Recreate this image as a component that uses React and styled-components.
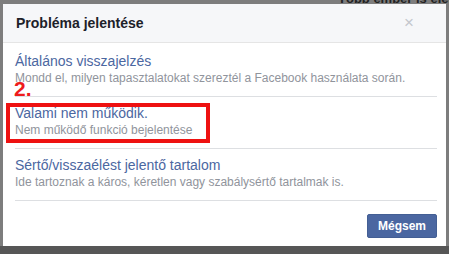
import React from 'react'
import styled, { createGlobalStyle } from 'styled-components'

const items = [
  {
    title: 'Általános visszajelzés',
    sub: 'Mondd el, milyen tapasztalatokat szereztél a Facebook használata során.',
  },
  {
    title: 'Valami nem működik.',
    sub: 'Nem működő funkció bejelentése',
  },
  {
    title: 'Sértő/visszaélést jelentő tartalom',
    sub: 'Ide tartoznak a káros, kéretlen vagy szabálysértő tartalmak is.',
  },
]

const App = () => (
  <Page>
    <GlobalStyle />
    <BackText>Több ember is elen</BackText>
    <Dialog>
      <Header>
        <Title>Probléma jelentése</Title>
        <Close>×</Close>
      </Header>
      <List>
        {items.map(item => (
          <Row key={item.title}>
            <RowTitle>{item.title}</RowTitle>
            <RowSub>{item.sub}</RowSub>
          </Row>
        ))}
      </List>
      <Footer>
        <Button>Mégsem</Button>
      </Footer>
      <StepLabel>2.</StepLabel>
      <Highlight />
    </Dialog>
  </Page>
)

export default App

const GlobalStyle = createGlobalStyle`
  html, body {
    margin: 0;
    padding: 0;
    background: #6c6c6c;
    font-family: "Liberation Sans", Arial, sans-serif;
  }
`

const Page = styled.div`
  position: relative;
  width: 449px;
  height: 254px;
  overflow: hidden;
  padding: 4px 3px 0 3px;
  box-sizing: border-box;
  background: linear-gradient(to bottom, #7d7d7d 0, #7d7d7d 246px, #565656 246px);
`
const BackText = styled.span`
  position: absolute;
  top: -9px;
  left: 338px;
  font-size: 13px;
  font-weight: bold;
  color: #222;
  white-space: nowrap;
`
const Dialog = styled.div`
  position: relative;
  width: 443px;
  height: 242px;
  background: #fff;
  display: flex;
  flex-direction: column;
`
const Header = styled.div`
  height: 38px;
  background: #f6f7f9;
  border-bottom: 1px solid #e5e5e5;
  display: flex;
  align-items: center;
  justify-content: space-between;
  padding: 0 13px 0 13px;
`
const Title = styled.div`
  font-size: 14px;
  font-weight: bold;
  color: #1d2129;
`
const Close = styled.div`
  font-size: 17px;
  color: #c4c7cd;
  line-height: 1;
  margin-top: -1px;
  margin-right: 19px;
`
const List = styled.div`
  padding-top: 2px;
  display: flex;
  flex-direction: column;
`
const Row = styled.div`
  margin: 0 9px 0 12px;
  padding: 7px 0 9px 0;
  border-bottom: 1px solid #dddfe2;
`
const RowTitle = styled.div`
  font-size: 14px;
  line-height: 18px;
  color: #4b67a1;
`
const RowSub = styled.div`
  font-size: 12px;
  line-height: 17px;
  color: #90949c;
`
const Footer = styled.div`
  display: flex;
  justify-content: flex-end;
  padding: 13px 9px 0 0;
`
const Button = styled.div`
  height: 24px;
  box-sizing: border-box;
  padding: 0 10px;
  display: flex;
  align-items: center;
  background: #4b67a1;
  border: 1px solid #445f94;
  border-radius: 2px;
  color: #fff;
  font-size: 12px;
  font-weight: bold;
`
const StepLabel = styled.div`
  position: absolute;
  left: 11px;
  top: 74px;
  font-size: 21px;
  font-weight: bold;
  color: #ee1c1c;
  line-height: 1;
`
const Highlight = styled.div`
  position: absolute;
  left: 3px;
  top: 99px;
  width: 204px;
  height: 40px;
  box-sizing: border-box;
  border: 4px solid #ee1111;
`
